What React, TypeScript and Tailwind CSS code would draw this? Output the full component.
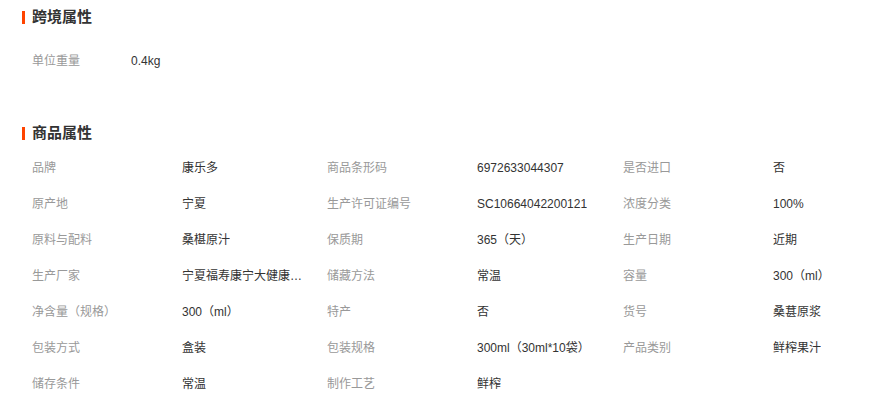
import React from "react";

const font = { fontFamily: '"Liberation Sans", Arial, "Noto Sans CJK SC", sans-serif' };

const rows: [string, string][][] = [
  [["品牌", "康乐多"], ["商品条形码", "6972633044307"], ["是否进口", "否"]],
  [["原产地", "宁夏"], ["生产许可证编号", "SC10664042200121"], ["浓度分类", "100%"]],
  [["原料与配料", "桑椹原汁"], ["保质期", "365（天）"], ["生产日期", "近期"]],
  [["生产厂家", "宁夏福寿康宁大健康产业有限公司"], ["储藏方法", "常温"], ["容量", "300（ml）"]],
  [["净含量（规格）", "300（ml）"], ["特产", "否"], ["货号", "桑葚原浆"]],
  [["包装方式", "盒装"], ["包装规格", "300ml（30ml*10袋）"], ["产品类别", "鲜榨果汁"]],
  [["储存条件", "常温"], ["制作工艺", "鲜榨"]],
];

function Title({ text }: { text: string }) {
  return (
    <div className="flex h-[34px] items-center pl-[22px]">
      <div className="h-[13px] w-[3px] bg-[#ff4400]" />
      <div className="ml-[7px] text-[15px] font-bold leading-[20px] text-[#333333]">{text}</div>
    </div>
  );
}

export default function App() {
  return (
    <div className="h-[405px] w-[869px] overflow-hidden bg-white text-[12px]" style={font}>
      <Title text="跨境属性" />
      <div className="mt-[9px] flex h-[36px] items-center pl-[32px]">
        <div className="w-[99px] text-[#999999]">单位重量</div>
        <div className="text-[#333333]">0.4kg</div>
      </div>
      <div className="h-[37px]" />
      <Title text="商品属性" />
      <div className="grid grid-cols-[150px_145px_150px_146px_150px_auto] pl-[32px]">
        {rows.map((r, i) => (
          <React.Fragment key={i}>
            {[0, 1, 2].map((c) => (
              <React.Fragment key={c}>
                <div className="flex h-[36px] items-center whitespace-nowrap text-[#999999]">{r[c] ? r[c][0] : ""}</div>
                <div className="flex h-[36px] items-center text-[#333333]">
                  <span className="block max-w-[124px] overflow-hidden text-ellipsis whitespace-nowrap">
                    {r[c] ? r[c][1] : ""}
                  </span>
                </div>
              </React.Fragment>
            ))}
          </React.Fragment>
        ))}
      </div>
    </div>
  );
}
